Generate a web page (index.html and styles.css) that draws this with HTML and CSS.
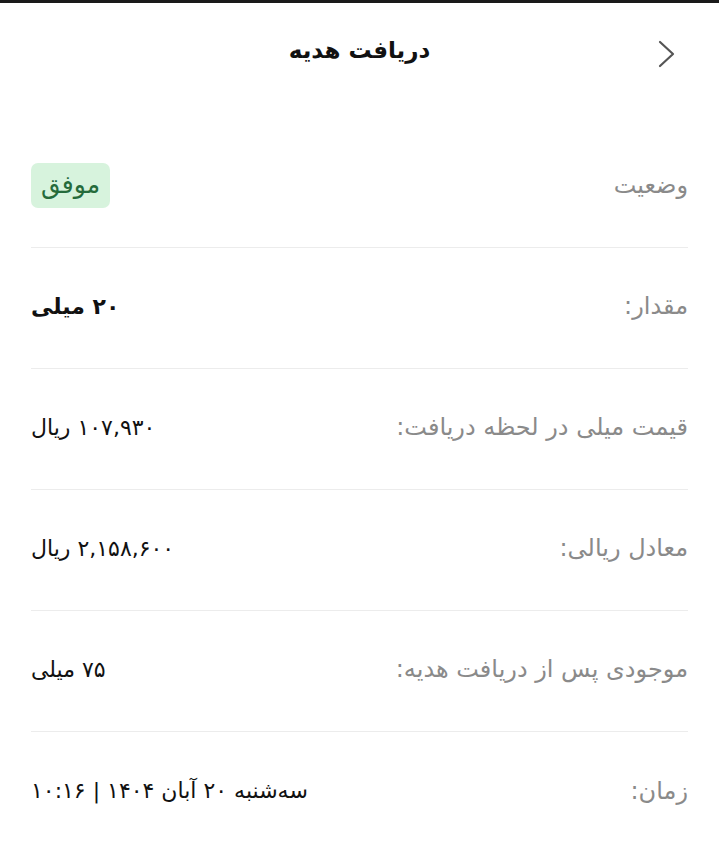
FILE: index.html
```html
<!DOCTYPE html>
<html lang="fa" dir="rtl">
<head>
<meta charset="utf-8">
<link rel="stylesheet" href="styles.css">
</head>
<body>
<div class="topbar"></div>
<header class="header">
  <span class="back"><svg width="20" height="28" viewBox="0 0 20 28"><path d="M3 2 L16 14 L3 26" fill="none" stroke="#555" stroke-width="2.2" stroke-linecap="round" stroke-linejoin="round"/></svg></span>
  <h1 class="title">دریافت هدیه</h1>
</header>
<main class="list">
  <div class="row"><span class="label">وضعیت</span><span class="badge">موفق</span></div>
  <div class="row"><span class="label">مقدار:</span><span class="value bold">۲۰ میلی</span></div>
  <div class="row"><span class="label">قیمت میلی در لحظه دریافت:</span><span class="value">۱۰۷,۹۳۰ ریال</span></div>
  <div class="row"><span class="label">معادل ریالی:</span><span class="value">۲,۱۵۸,۶۰۰ ریال</span></div>
  <div class="row"><span class="label">موجودی پس از دریافت هدیه:</span><span class="value">۷۵ میلی</span></div>
  <div class="row last"><span class="label">زمان:</span><span class="value">سه‌شنبه ۲۰ آبان ۱۴۰۴ | ۱۰:۱۶</span></div>
</main>
</body>
</html>
```
FILE: styles.css
```css
html, body {
  margin: 0;
  padding: 0;
  background: #fff;
  font-family: "DejaVu Sans", sans-serif;
  color: #111;
}
.topbar {
  height: 3px;
  background: #1a1a1a;
}
.header {
  height: 124px;
  position: relative;
  display: flex;
  justify-content: center;
  align-items: flex-start;
}
.title {
  margin: 32px 0 0;
  font-size: 23px;
  font-weight: bold;
  line-height: 30px;
}
.back {
  position: absolute;
  right: 42px;
  top: 37px;
  display: flex;
}
.list {
  padding: 0 31px;
}
.row {
  height: 121px;
  box-sizing: border-box;
  padding-bottom: 4px;
  border-bottom: 1px solid #ececec;
  display: flex;
  justify-content: space-between;
  align-items: center;
}
.row.last {
  border-bottom: none;
}
.label {
  color: #8a8a8a;
  font-size: 24px;
}
.value {
  font-size: 22px;
  color: #111;
}
.value.bold {
  font-weight: bold;
}
.badge {
  background: #d7f3dd;
  color: #256b3b;
  font-size: 25px;
  line-height: 30px;
  border-radius: 7px;
  padding: 7px 10px 8px;
}
```
